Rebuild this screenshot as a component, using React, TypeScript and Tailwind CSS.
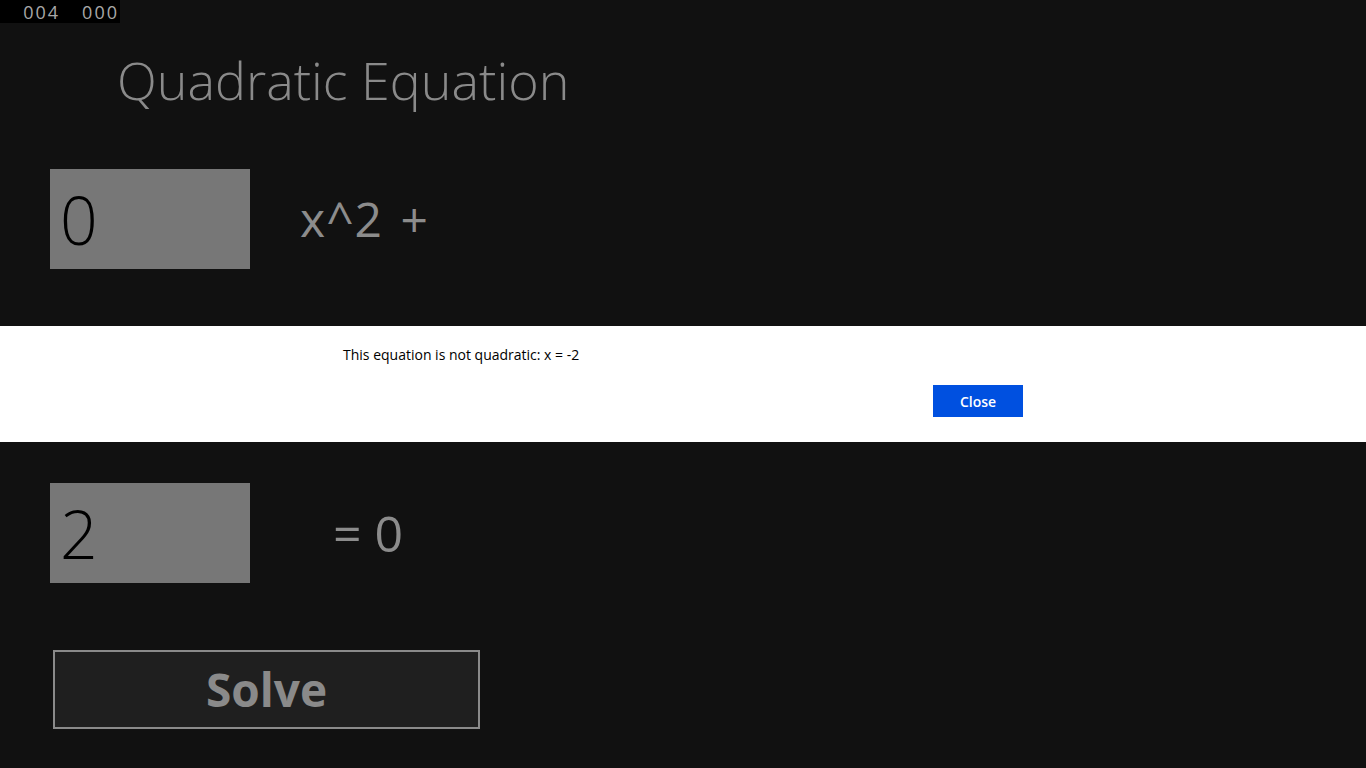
import React from "react";

const font = { fontFamily: '"Open Sans", "Noto Sans", sans-serif' };

function NumberBox({ value }: { value: string }) {
  return (
    <div className="flex h-[100px] w-[200px] items-center bg-[#777777] pl-[10px]">
      <span className="text-[66px] font-light leading-none text-black">{value}</span>
    </div>
  );
}

export default function App() {
  return (
    <div
      className="relative h-[768px] w-[1366px] overflow-hidden bg-[#111111]"
      style={font}
    >
      {/* frame counter */}
      <div className="absolute left-0 top-0 flex h-[23px] w-[120px] items-center justify-end gap-[22px] bg-black pr-[1px] text-[18px] leading-none tracking-[2px] text-[#a8a8a8]">
        <span>004</span>
        <span>000</span>
      </div>

      <div className="flex flex-col">
        <h1 className="ml-[117px] mt-[44px] h-[72px] text-[52px] font-light leading-[72px] text-[#8a8a8a]">
          Quadratic Equation
        </h1>

        <div className="ml-[50px] mt-[53px] flex items-center gap-[50px]">
          <NumberBox value="0" />
          <span className="text-[48px] leading-none tracking-[1px] text-[#8c8c8c] [word-spacing:4px]">x^2 +</span>
        </div>

        {/* b row, covered by the message dialog */}
        <div className="invisible ml-[50px] mt-[57px] flex items-center gap-[50px]">
          <NumberBox value="1" />
          <span className="text-[48px] leading-none tracking-[1px] text-[#8c8c8c] [word-spacing:4px]">x +</span>
        </div>

        <div className="ml-[50px] mt-[57px] flex items-center gap-[83px]">
          <NumberBox value="2" />
          <span className="text-[50px] leading-none text-[#8c8c8c]">= 0</span>
        </div>

        <button
          type="button"
          className="ml-[53px] mt-[67px] flex h-[79px] w-[427px] items-center justify-center border-2 border-[#8a8a8a] bg-[#1f1f1f] text-[46px] font-bold text-[#8a8a8a]"
        >
          Solve
        </button>
      </div>

      {/* message dialog */}
      <div className="absolute left-0 top-[326px] h-[116px] w-full bg-white">
        <div className="ml-[343px] w-[680px] pt-[20px]">
          <p className="text-[14px] leading-[18px] text-black">
            This equation is not quadratic: x = -2
          </p>
          <div className="mt-[21px] flex justify-end">
            <button
              type="button"
              className="h-[32px] w-[90px] bg-[#0050e0] text-[14px] font-semibold text-white"
            >
              Close
            </button>
          </div>
        </div>
      </div>
    </div>
  );
}
